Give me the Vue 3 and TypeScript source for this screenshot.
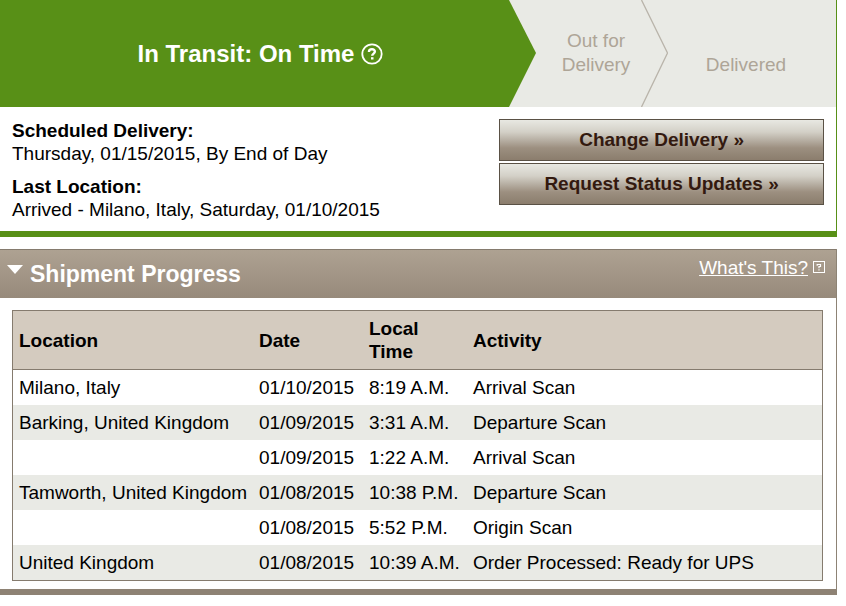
<script setup lang="ts">
interface Scan {
  location: string
  date: string
  time: string
  activity: string
}

const scans: Scan[] = [
  { location: 'Milano, Italy', date: '01/10/2015', time: '8:19 A.M.', activity: 'Arrival Scan' },
  { location: 'Barking, United Kingdom', date: '01/09/2015', time: '3:31 A.M.', activity: 'Departure Scan' },
  { location: '', date: '01/09/2015', time: '1:22 A.M.', activity: 'Arrival Scan' },
  { location: 'Tamworth, United Kingdom', date: '01/08/2015', time: '10:38 P.M.', activity: 'Departure Scan' },
  { location: '', date: '01/08/2015', time: '5:52 P.M.', activity: 'Origin Scan' },
  { location: 'United Kingdom', date: '01/08/2015', time: '10:39 A.M.', activity: 'Order Processed: Ready for UPS' },
]
</script>

<template>
  <main class="page">
    <section class="status">
      <div class="steps">
        <div class="step current">
          <h1>In Transit: On Time</h1>
          <svg class="help" viewBox="0 0 22 22" aria-hidden="true">
            <circle cx="11" cy="11" r="9.7" fill="none" stroke="#fff" stroke-width="1.8" />
            <path d="M8 9V8.600C8 7 9.200 6.200 11 6.200s2.900 0.900 2.900 2.400c0 2-2.700 2-2.700 4.200" fill="none" stroke="#fff" stroke-width="2.400" />
            <rect x="10" y="14.200" width="2.500" height="2.300" fill="#fff" />
          </svg>
        </div>
        <svg class="arrow" viewBox="0 0 27 107" preserveAspectRatio="none" aria-hidden="true">
          <path d="M0 0L27 53L0 107Z" fill="#589017" />
        </svg>
        <div class="step out"><span>Out for<br />Delivery</span></div>
        <svg class="arrow" viewBox="0 0 27 107" preserveAspectRatio="none" aria-hidden="true">
          <path d="M0.500 0L26.500 53L0.500 107" fill="none" stroke="#b9b4aa" stroke-width="1.300" />
        </svg>
        <div class="step delivered"><span>Delivered</span></div>
      </div>
      <div class="details">
        <dl class="facts">
          <div>
            <dt>Scheduled Delivery:</dt>
            <dd>Thursday, 01/15/2015, By End of Day</dd>
          </div>
          <div>
            <dt>Last Location:</dt>
            <dd>Arrived - Milano, Italy, Saturday, 01/10/2015</dd>
          </div>
        </dl>
        <div class="actions">
          <button type="button">Change Delivery »</button>
          <button type="button">Request Status Updates »</button>
        </div>
      </div>
    </section>

    <section class="progress">
      <header class="bar">
        <h2>
          <button type="button" class="toggle" aria-expanded="true">
            <svg class="caret" viewBox="0 0 16 9" aria-hidden="true"><path d="M0 0H16L8 9Z" fill="#fff" /></svg>
            <span>Shipment Progress</span>
          </button>
        </h2>
        <a class="what" href="#">
          <span>What's This?</span>
          <svg class="hint" viewBox="0 0 12 12" aria-hidden="true">
            <rect x="0.500" y="0.500" width="11" height="11" fill="none" stroke="#fff" />
            <path d="M4.200 4.800V3.500H7.500V5.500H6V7.200M6 8.200V9.500" fill="none" stroke="#fff" stroke-width="1.200" />
          </svg>
        </a>
      </header>
      <div class="body">
        <table>
          <colgroup>
            <col class="c-location" />
            <col class="c-date" />
            <col class="c-time" />
            <col />
          </colgroup>
          <thead>
            <tr>
              <th scope="col">Location</th>
              <th scope="col">Date</th>
              <th scope="col">Local<br />Time</th>
              <th scope="col">Activity</th>
            </tr>
          </thead>
          <tbody>
            <tr v-for="(scan, i) in scans" :key="i">
              <td>{{ scan.location }}</td>
              <td>{{ scan.date }}</td>
              <td>{{ scan.time }}</td>
              <td>{{ scan.activity }}</td>
            </tr>
          </tbody>
        </table>
      </div>
    </section>
  </main>
</template>

<style>
body {
  margin: 0;
  background: #fff;
}
</style>

<style scoped>
* {
  box-sizing: border-box;
}

.page {
  display: flex;
  flex-direction: column;
  gap: 12px;
  padding-right: 9px;
  font-family: "Liberation Sans", Arial, sans-serif;
  font-size: 19px;
  line-height: 23px;
  color: #000;
}

h1,
h2,
dl,
dd {
  margin: 0;
}

h1,
h2 {
  font-size: 24px;
  line-height: 28px;
}

h2 {
  font-size: 23px;
}

.status {
  border-right: 1px solid #589017;
  border-bottom: 6px solid #589017;
}

.steps {
  display: grid;
  grid-template-columns: 509fr 27px 105fr 27px 168fr;
  height: 107px;
  background: #e9eae5;
  color: #aea597;
  line-height: 24px;
  text-align: center;
}

.step {
  display: flex;
  justify-content: center;
}

.current {
  align-items: center;
  gap: 7px;
  padding-left: 12px;
  background: #589017;
  color: #fff;
}

.out {
  align-items: flex-end;
  padding: 0 0 30px 15px;
}

.delivered {
  align-items: flex-end;
  padding: 0 12px 30px 0;
}

.help {
  width: 22px;
  height: 22px;
}

.arrow {
  width: 27px;
  height: 107px;
}

.details {
  display: flex;
  justify-content: space-between;
  padding: 12px 12px 10px;
}

.facts {
  display: flex;
  flex-direction: column;
  gap: 10px;
}

dt {
  font-weight: bold;
}

.actions {
  display: flex;
  flex-direction: column;
  gap: 2px;
  width: 40%;
}

.actions button {
  height: 42px;
  padding: 0 0 2px;
  border: 1px solid #5a5145;
  background: linear-gradient(#e8e8e2, #d3d0c7 30%, #9c8f80 70%, #8b7d6d);
  color: #33190f;
  font: bold 19px/23px "Liberation Sans", Arial, sans-serif;
}

.progress {
  border-right: 1px solid #8d8375;
  border-bottom: 6px solid #8e8274;
}

.bar {
  display: flex;
  justify-content: space-between;
  height: 49px;
  padding: 6px 11px 0 7px;
  border-top: 1px solid #857b6e;
  background: linear-gradient(#aea292, #978a7b);
  color: #fff;
}

.toggle {
  display: flex;
  gap: 7px;
  padding: 4px 0;
  border: 0;
  background: none;
  color: inherit;
  font: inherit;
}

.caret {
  width: 16px;
  height: 9px;
  margin-top: 5px;
}

.what {
  display: flex;
  gap: 5px;
  color: inherit;
  text-decoration: none;
}

.what span {
  text-decoration: underline;
}

.hint {
  width: 12px;
  height: 12px;
  margin-top: 5px;
}

.body {
  padding: 12px 13px 8px 12px;
}

table {
  width: 100%;
  table-layout: fixed;
  border: 1px solid #857b6e;
  border-spacing: 0;
}

.c-location {
  width: 240px;
}

.c-date {
  width: 110px;
}

.c-time {
  width: 104px;
}

th,
td {
  padding: 6px 0 6px 6px;
  text-align: left;
  white-space: nowrap;
}

th {
  height: 59px;
  border-bottom: 1px solid #857b6e;
  background: #d4cbbf;
}

td {
  height: 35px;
}

tbody tr:nth-child(even) {
  background: #e9eae5;
}
</style>
